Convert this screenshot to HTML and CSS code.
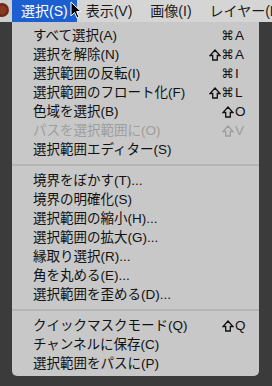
FILE: index.html
```html
<!DOCTYPE html>
<html lang="ja">
<head>
<meta charset="utf-8">
<link rel="stylesheet" href="styles.css">
</head>
<body>
<div class="screen">
  <div class="menubar">
    <div class="appicon"><svg width="12" height="22" viewBox="0 0 12 22"><circle cx="2" cy="10" r="7" fill="#6b2a1c"/><circle cx="2" cy="10" r="4.5" fill="#8a3a24"/></svg></div>
    <div class="mb-item active">選択(S)</div>
    <div class="mb-item">表示(V)</div>
    <div class="mb-item">画像(I)</div>
    <div class="mb-item">レイヤー(L)</div>
  </div>
  <div class="below">
    <div class="side-left"></div>
    <div class="menu">
      <div class="row"><span class="label">すべて選択(A)</span><span class="sc"><span class="mods">⌘</span><span class="key">A</span></span></div>
      <div class="row"><span class="label">選択を解除(N)</span><span class="sc"><span class="mods"><svg class="shift" viewBox="0 0 12 12"><path d="M6 1 L11 6.5 L8.3 6.5 L8.3 11 L3.7 11 L3.7 6.5 L1 6.5 Z"/></svg>⌘</span><span class="key">A</span></span></div>
      <div class="row"><span class="label">選択範囲の反転(I)</span><span class="sc"><span class="mods">⌘</span><span class="key">I</span></span></div>
      <div class="row"><span class="label">選択範囲のフロート化(F)</span><span class="sc"><span class="mods"><svg class="shift" viewBox="0 0 12 12"><path d="M6 1 L11 6.5 L8.3 6.5 L8.3 11 L3.7 11 L3.7 6.5 L1 6.5 Z"/></svg>⌘</span><span class="key">L</span></span></div>
      <div class="row"><span class="label">色域を選択(B)</span><span class="sc"><span class="mods"><svg class="shift" viewBox="0 0 12 12"><path d="M6 1 L11 6.5 L8.3 6.5 L8.3 11 L3.7 11 L3.7 6.5 L1 6.5 Z"/></svg></span><span class="key">O</span></span></div>
      <div class="row disabled"><span class="label">パスを選択範囲に(O)</span><span class="sc"><span class="mods"><svg class="shift" viewBox="0 0 12 12"><path d="M6 1 L11 6.5 L8.3 6.5 L8.3 11 L3.7 11 L3.7 6.5 L1 6.5 Z"/></svg></span><span class="key">V</span></span></div>
      <div class="row"><span class="label">選択範囲エディター(S)</span></div>
      <div class="sep"></div>
      <div class="row"><span class="label">境界をぼかす(T)...</span></div>
      <div class="row"><span class="label">境界の明確化(S)</span></div>
      <div class="row"><span class="label">選択範囲の縮小(H)...</span></div>
      <div class="row"><span class="label">選択範囲の拡大(G)...</span></div>
      <div class="row"><span class="label">縁取り選択(R)...</span></div>
      <div class="row"><span class="label">角を丸める(E)...</span></div>
      <div class="row"><span class="label">選択範囲を歪める(D)...</span></div>
      <div class="sep"></div>
      <div class="row"><span class="label">クイックマスクモード(Q)</span><span class="sc"><span class="mods"><svg class="shift" viewBox="0 0 12 12"><path d="M6 1 L11 6.5 L8.3 6.5 L8.3 11 L3.7 11 L3.7 6.5 L1 6.5 Z"/></svg></span><span class="key">Q</span></span></div>
      <div class="row"><span class="label">チャンネルに保存(C)</span></div>
      <div class="row"><span class="label">選択範囲をパスに(P)</span></div>
    </div>
    <div class="side-right"></div>
  </div>
  <svg class="cursor" width="12" height="18" viewBox="0 0 12 18"><path d="M1 1 L1 15 L4.5 11.5 L7 17 L9 16 L6.6 10.6 L11 10.6 Z" fill="#000" stroke="#fff" stroke-width="1" stroke-linejoin="round"/></svg>
</div>
</body>
</html>
```
FILE: styles.css
```css
html, body {
  margin: 0;
  padding: 0;
  background: #3b3b3b;
}
body {
  width: 272px;
  height: 386px;
  overflow: hidden;
  font-family: "Liberation Sans", "Noto Sans CJK JP", sans-serif;
  color: #111;
}
.screen {
  position: relative;
  width: 272px;
  height: 386px;
  display: flex;
  flex-direction: column;
}
.menubar {
  height: 22px;
  background: #d5d5d5;
  display: flex;
  align-items: stretch;
  white-space: nowrap;
  overflow: hidden;
  font-size: 14px;
  line-height: 22px;
}
.appicon {
  width: 12px;
  flex: none;
  background: #cfcfcf;
}
.appicon svg { display: block; }
.mb-item {
  padding: 0 9px;
  flex: none;
  color: #1a1a1a;
}
.mb-item.active {
  background: #1c5fd1;
  color: #fff;
}
.below {
  flex: 1;
  display: flex;
  align-items: flex-start;
}
.side-left {
  width: 12px;
  flex: none;
}
.side-right {
  flex: 1;
}
.menu {
  width: 247px;
  flex: none;
  background: #c8c8c8;
  border-radius: 0 0 5px 5px;
  padding: 4px 0 3px;
  font-size: 13.5px;
}
.row {
  height: 19px;
  line-height: 19px;
  display: flex;
  align-items: center;
  padding: 0 11px 0 21px;
  white-space: nowrap;
}
.label {
  flex: 1;
}
.sc {
  display: flex;
  align-items: center;
  font-family: "DejaVu Sans", "Liberation Sans", sans-serif;
  font-size: 12.5px;
}
.mods {
  display: flex;
  align-items: center;
  gap: 1px;
}
.shift {
  width: 12px;
  height: 12px;
  fill: none;
  stroke: currentColor;
  stroke-width: 1.3;
  stroke-linejoin: miter;
}
.key {
  width: 13px;
  padding-left: 1px;
  font-family: "Liberation Sans", sans-serif;
  font-size: 13.5px;
}
.disabled {
  color: #9e9e9e;
}
.sep {
  height: 2px;
  background: #b5b5b5;
  margin: 5px 0 5px;
}
.cursor {
  position: absolute;
  left: 70px;
  top: 1px;
}
```
